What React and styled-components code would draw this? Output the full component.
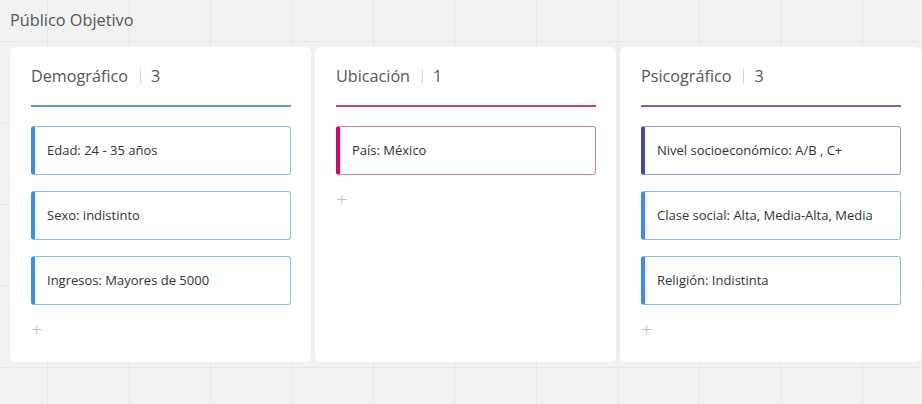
import React from "react";
import styled, { createGlobalStyle } from "styled-components";

const GlobalStyle = createGlobalStyle`
  html, body {
    margin: 0;
    padding: 0;
  }
  body {
    font-family: "Open Sans", "Noto Sans", sans-serif;
    background-color: #f2f2f2;
    background-image:
      linear-gradient(to right, #e6e6e6 1px, transparent 1px),
      linear-gradient(to bottom, #e6e6e6 1px, transparent 1px);
    background-size: 81.5px 81.5px;
    background-position: 47px 41px;
    min-height: 404px;
  }
`;

const Page = styled.div`
  padding: 0 0 0 10px;
`;

const Title = styled.h1`
  margin: 0;
  height: 47px;
  padding-top: 9px;
  box-sizing: border-box;
  font-size: 16.3px;
  font-weight: normal;
  color: #555;
`;

const Board = styled.div`
  display: grid;
  grid-template-columns: repeat(3, 301px);
  gap: 4px;
`;

const Column = styled.section`
  background: #fff;
  border-radius: 6px;
  padding: 0 20px 0 21px;
  height: 315px;
  box-sizing: border-box;
  display: flex;
  flex-direction: column;
`;

const Header = styled.div`
  display: flex;
  align-items: center;
  height: 60px;
  box-sizing: border-box;
  border-bottom: 2px solid ${(p) => p.$line};
  font-size: 16.2px;
  color: #555;
  margin-bottom: 19px;
`;

const Divider = styled.span`
  width: 1px;
  height: 15px;
  background: #d8d8d8;
  margin: 0 10px 0 12px;
`;

const Items = styled.div`
  display: flex;
  flex-direction: column;
  gap: 16px;
`;

const Item = styled.div`
  height: 49px;
  box-sizing: border-box;
  display: flex;
  align-items: center;
  padding: 0 0 2px 12px;
  border: 1px solid ${(p) => p.$border};
  border-left: 4px solid ${(p) => p.$bar};
  border-radius: 3px;
  font-size: 13px;
  color: #333;
`;

const Add = styled.div`
  margin-top: 15px;
  font-size: 20px;
  line-height: 20px;
  font-weight: 300;
  color: #bdbdbd;
`;

const columns = [
  {
    name: "Demográfico",
    line: "#5b9bd5",
    bar: "#3a8ee6",
    border: "#86bcec",
    items: ["Edad: 24 - 35 años", "Sexo: indistinto", "Ingresos: Mayores de 5000"],
  },
  {
    name: "Ubicación",
    line: "#c0467f",
    bar: "#d3006e",
    border: "#de79a8",
    items: ["País: México"],
  },
  {
    name: "Psicográfico",
    line: "#6a6ca6",
    bar: "#4547a0",
    border: "#9a9bcb",
    items: [
      "Nivel socioeconómico: A/B , C+",
      "Clase social: Alta, Media-Alta, Media",
      "Religión: Indistinta",
    ],
    mixed: true,
  },
];

export default function App() {
  return (
    <Page>
      <GlobalStyle />
      <Title>Público Objetivo</Title>
      <Board>
        {columns.map((c) => (
          <Column key={c.name}>
            <Header $line={c.line}>
              {c.name}
              <Divider />
              {c.items.length}
            </Header>
            <Items>
              {c.items.map((t, i) => {
                const blue = c.mixed && i > 0;
                return (
                  <Item
                    key={t}
                    $bar={blue ? "#3a8ee6" : c.bar}
                    $border={blue ? "#86bcec" : c.border}
                  >
                    {t}
                  </Item>
                );
              })}
            </Items>
            <Add>+</Add>
          </Column>
        ))}
      </Board>
    </Page>
  );
}
